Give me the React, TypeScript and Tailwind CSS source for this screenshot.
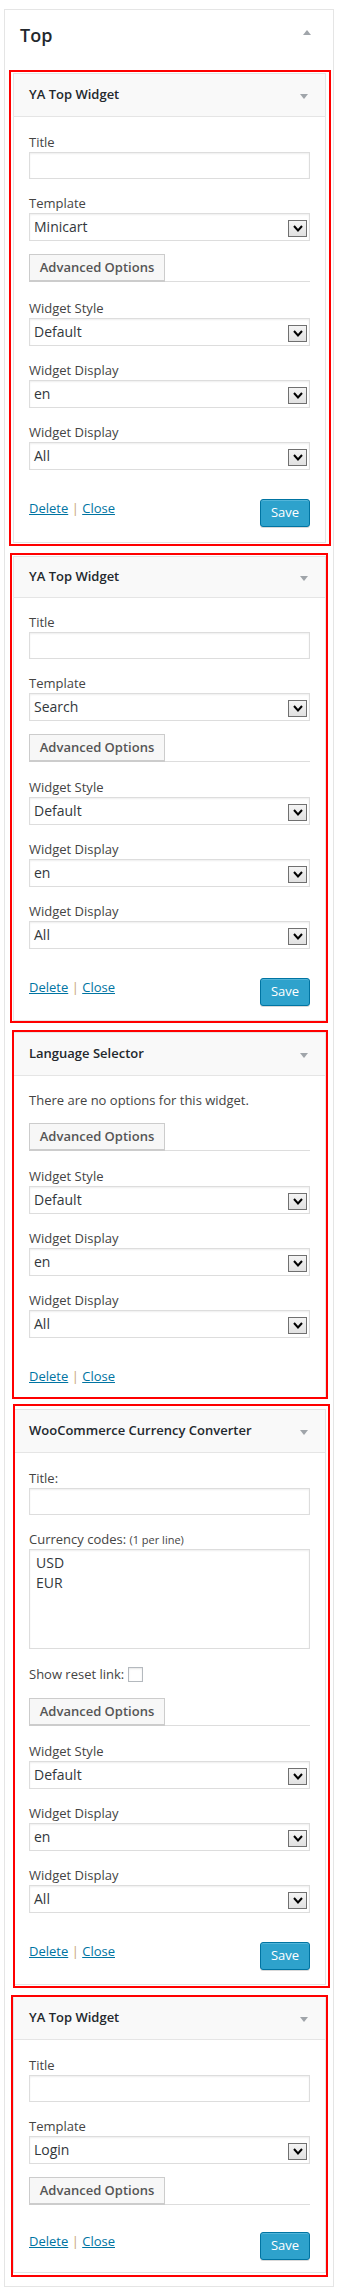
import React from "react";

function Chevron() {
  return (
    <div className="mt-[2px] flex h-[17px] w-[19px] items-center justify-center border border-[#707070] bg-[linear-gradient(#f4f4f4,#e1e1e1)]">
      <svg width="10" height="7" viewBox="0 0 10 7">
        <polyline points="1,1 5,5.5 9,1" fill="none" stroke="#000" strokeWidth="2" />
      </svg>
    </div>
  );
}

function Select({ value }: { value: string }) {
  return (
    <div className="flex h-[28px] items-center justify-between border border-[#ddd] bg-white pl-[4px] pr-[2px] shadow-[inset_0_1px_2px_rgba(0,0,0,0.07)]">
      <span className="text-[14px] leading-[18px] text-[#32373c]">{value}</span>
      <Chevron />
    </div>
  );
}

function TextInput() {
  return <div className="h-[27px] border border-[#ddd] bg-white shadow-[inset_0_1px_2px_rgba(0,0,0,0.07)]" />;
}

function Field({ label, className = "", children }: { label: React.ReactNode; className?: string; children: React.ReactNode }) {
  return (
    <div className={className}>
      <div className="text-[13px] leading-[19px] text-[#444]">{label}</div>
      {children}
    </div>
  );
}

function Advanced({ className = "" }: { className?: string }) {
  return (
    <div className={`h-[28px] border-b border-[#ddd] ${className}`}>
      <div className="flex h-[27px] w-[136px] items-center justify-center border border-[#ccc] bg-[#f7f7f7] text-[13px] font-semibold text-[#555] shadow-[0_1px_0_#ccc]">
        Advanced Options
      </div>
    </div>
  );
}

function Footer({ save = true, className = "" }: { save?: boolean; className?: string }) {
  return (
    <div className={`flex items-start justify-between ${className}`}>
      <div className="text-[13px] leading-[18px] text-[#444]">
        <a className="text-[#0074a2] underline">Delete</a>{" "}
        <span className="text-[#c9a46d]">|</span>{" "}
        <a className="text-[#0074a2] underline">Close</a>
      </div>
      {save && (
        <div className="flex h-[28px] w-[50px] items-center justify-center rounded-[3px] border border-[#0074a2] bg-[#2ea2cc] text-[13px] text-white shadow-[inset_0_1px_0_rgba(120,200,230,0.5),0_1px_0_rgba(0,0,0,0.15)]">
          Save
        </div>
      )}
    </div>
  );
}

function Widget({
  title,
  className = "",
  headerClass,
  bodyClass,
  redClass,
  children,
}: {
  title: string;
  className?: string;
  headerClass: string;
  bodyClass: string;
  redClass: string;
  children: React.ReactNode;
}) {
  return (
    <div className={`relative ml-[8px] w-[313px] border border-[#e5e5e5] bg-white ${className}`}>
      <div className={`flex items-center justify-between border-b border-[#e5e5e5] bg-[#f9f9f9] pl-[15px] pr-[17px] ${headerClass}`}>
        <span className="text-[13px] font-semibold text-[#23282d]">{title}</span>
        <svg width="8" height="5" viewBox="0 0 8 5" className="mt-[2px]">
          <polygon points="0,0 8,0 4,5" fill="#a0a5aa" />
        </svg>
      </div>
      <div className={`px-[15px] ${bodyClass}`}>{children}</div>
      <div className={`pointer-events-none absolute border-2 border-[#ff0000] ${redClass}`} />
    </div>
  );
}

export default function App() {
  return (
    <div className="min-h-[2296px] bg-white pt-[9px] font-['Open_Sans',sans-serif]">
      <div className="ml-[4px] w-[330px] border border-[#e5e5e5] bg-white pb-[13px]">
        <div className="flex h-[63px] items-start justify-between pl-[15px] pr-[22px] pt-[13px]">
          <span className="text-[18px] font-semibold leading-[24px] text-[#23282d]">Top</span>
          <svg width="8" height="5" viewBox="0 0 8 5" className="mt-[7px]">
            <polygon points="0,5 8,5 4,0" fill="#a0a5aa" />
          </svg>
        </div>

        {/* Widget 1 */}
        <Widget
          title="YA Top Widget"
          headerClass="h-[43px]"
          bodyClass="pt-[16px] pb-[15px]"
          redClass="left-[-5px] top-[-4px] right-[-6px] bottom-[-4px]"
        >
          <Field label="Title">
            <TextInput />
          </Field>
          <Field label="Template" className="mt-[15px]">
            <Select value="Minicart" />
          </Field>
          <Advanced className="mt-[13px]" />
          <Field label="Widget Style" className="mt-[17px]">
            <Select value="Default" />
          </Field>
          <Field label="Widget Display" className="mt-[15px]">
            <Select value="en" />
          </Field>
          <Field label="Widget Display" className="mt-[15px]">
            <Select value="All" />
          </Field>
          <Footer className="mt-[29px]" />
        </Widget>

        {/* Widget 2 */}
        <Widget
          title="YA Top Widget"
          className="mt-[13px]"
          headerClass="h-[41px]"
          bodyClass="pt-[15px] pb-[14px]"
          redClass="left-[-4px] top-[-4px] right-[-3px] bottom-[-3px]"
        >
          <Field label="Title">
            <TextInput />
          </Field>
          <Field label="Template" className="mt-[15px]">
            <Select value="Search" />
          </Field>
          <Advanced className="mt-[13px]" />
          <Field label="Widget Style" className="mt-[16px]">
            <Select value="Default" />
          </Field>
          <Field label="Widget Display" className="mt-[15px]">
            <Select value="en" />
          </Field>
          <Field label="Widget Display" className="mt-[15px]">
            <Select value="All" />
          </Field>
          <Footer className="mt-[29px]" />
        </Widget>

        {/* Widget 3 */}
        <Widget
          title="Language Selector"
          className="mt-[11px]"
          headerClass="h-[43px]"
          bodyClass="pt-[15px] pb-[12px]"
          redClass="left-[-2px] top-[-3px] right-[-3px] bottom-[-2px]"
        >
          <p className="text-[13px] leading-[19px] text-[#444]">There are no options for this widget.</p>
          <Advanced className="mt-[13px]" />
          <Field label="Widget Style" className="mt-[16px]">
            <Select value="Default" />
          </Field>
          <Field label="Widget Display" className="mt-[15px]">
            <Select value="en" />
          </Field>
          <Field label="Widget Display" className="mt-[15px]">
            <Select value="All" />
          </Field>
          <Footer save={false} className="mt-[29px]" />
        </Widget>

        {/* Widget 4 */}
        <Widget
          title="WooCommerce Currency Converter"
          className="mt-[11px]"
          headerClass="h-[43px]"
          bodyClass="pt-[16px] pb-[14px]"
          redClass="left-[-1px] top-[-6px] right-[-5px] bottom-[-4px]"
        >
          <Field label="Title:">
            <TextInput />
          </Field>
          <Field
            label={
              <>
                Currency codes: <small className="text-[11px]">(1 per line)</small>
              </>
            }
            className="mt-[15px]"
          >
            <div className="h-[100px] border border-[#ddd] bg-white px-[6px] pt-[3px] text-[14px] leading-[20px] text-[#32373c] shadow-[inset_0_1px_2px_rgba(0,0,0,0.07)]">
              <div>USD</div>
              <div>EUR</div>
            </div>
          </Field>
          <div className="mt-[16px] flex h-[19px] items-center text-[13px] leading-[19px] text-[#444]">
            <span>Show reset link:</span>
            <span className="ml-[4px] h-[15px] w-[15px] border border-[#b4b9be] bg-white shadow-[inset_0_1px_2px_rgba(0,0,0,0.1)]" />
          </div>
          <Advanced className="mt-[14px]" />
          <Field label="Widget Style" className="mt-[16px]">
            <Select value="Default" />
          </Field>
          <Field label="Widget Display" className="mt-[15px]">
            <Select value="en" />
          </Field>
          <Field label="Widget Display" className="mt-[15px]">
            <Select value="All" />
          </Field>
          <Footer className="mt-[29px]" />
        </Widget>

        {/* Widget 5 */}
        <Widget
          title="YA Top Widget"
          className="mt-[11px]"
          headerClass="h-[43px]"
          bodyClass="pt-[16px] pb-[12px]"
          redClass="left-[-3px] top-[-2px] right-[-3px] bottom-[-5px]"
        >
          <Field label="Title">
            <TextInput />
          </Field>
          <Field label="Template" className="mt-[15px]">
            <Select value="Login" />
          </Field>
          <Advanced className="mt-[13px]" />
          <Footer className="mt-[27px]" />
        </Widget>
      </div>
    </div>
  );
}
